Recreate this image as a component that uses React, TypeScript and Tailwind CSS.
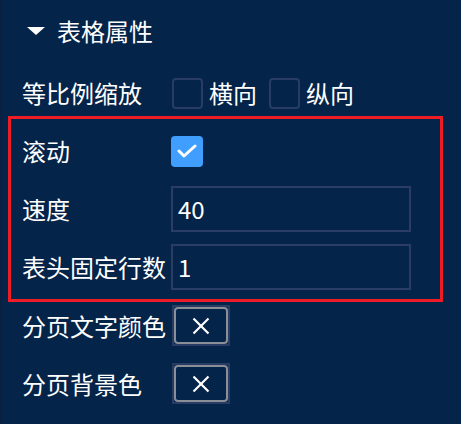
import React from 'react';

const font = { fontFamily: '"Noto Sans CJK SC", "Noto Sans", sans-serif' };

const Box: React.FC<{ checked?: boolean }> = ({ checked }) => {
    if (checked) {
        return (
            <div className="w-[32px] h-[31px] rounded-[4px] bg-[#409eff] flex items-center justify-center">
                <svg width="20" height="14" viewBox="0 0 20 14">
                    <polyline points="2,7 7,12 18,2" fill="none" stroke="#fff" strokeWidth="3" strokeLinecap="round" strokeLinejoin="round" />
                </svg>
            </div>
        );
    }
    return <div className="w-[31px] h-[31px] rounded-[4px] border-2 border-[#293c63]"></div>;
};

const ColorButton: React.FC = () => (
    <div className="w-[58px] h-[41px] border-2 border-[#283b62]">
        <div className="w-full h-full rounded-[4px] border-2 border-[#8a8e96] flex items-center justify-center">
            <svg width="18" height="18" viewBox="0 0 18 18">
                <line x1="1.5" y1="1.5" x2="16.5" y2="16.5" stroke="#fff" strokeWidth="2.2" />
                <line x1="16.5" y1="1.5" x2="1.5" y2="16.5" stroke="#fff" strokeWidth="2.2" />
            </svg>
        </div>
    </div>
);

const Input: React.FC<{ value: string }> = ({ value }) => (
    <div className="w-[240px] h-[46px] border-2 border-[#2b3d64] flex items-center pl-[5px] text-[24px] text-white">
        {value}
    </div>
);

export default function App() {
    return (
        <div className="w-[461px] h-[424px] bg-[#05244a] border-l-2 border-[#0b1f3e] text-white overflow-hidden" style={font}>
            {/* heading */}
            <div className="h-[40px] mt-[11px] flex items-center pl-[25px]">
                <svg width="18" height="8" viewBox="0 0 18 8" className="mr-[12px]">
                    <polygon points="0,0 18,0 9,8" fill="#fff" />
                </svg>
                <span className="text-[24px] leading-none">表格属性</span>
            </div>

            {/* 等比例缩放 */}
            <div className="h-[46px] mt-[19px] flex items-center pl-[20px] text-[24px] leading-none">
                <span className="w-[150px]">等比例缩放</span>
                <Box />
                <span className="ml-[6px]">横向</span>
                <div className="ml-[12px]"><Box /></div>
                <span className="ml-[6px]">纵向</span>
            </div>

            {/* highlighted group */}
            <div className="mx-[6px] w-[435px] border-[3px] border-[#ee1c25] pt-[9px] pb-[9px] flex flex-col gap-[12px] text-[24px] leading-none">
                <div className="h-[46px] flex items-center pl-[11px]">
                    <span className="w-[149px]">滚动</span>
                    <Box checked />
                </div>
                <div className="h-[46px] flex items-center pl-[11px]">
                    <span className="w-[149px]">速度</span>
                    <Input value="40" />
                </div>
                <div className="h-[46px] flex items-center pl-[11px]">
                    <span className="w-[149px] whitespace-nowrap">表头固定行数</span>
                    <Input value="1" />
                </div>
            </div>

            {/* pagination colors */}
            <div className="mt-[3px] flex flex-col gap-[17px] text-[24px] leading-none">
                <div className="h-[41px] flex items-center pl-[20px]">
                    <span className="w-[150px] whitespace-nowrap">分页文字颜色</span>
                    <ColorButton />
                </div>
                <div className="h-[41px] flex items-center pl-[20px]">
                    <span className="w-[150px]">分页背景色</span>
                    <ColorButton />
                </div>
            </div>
        </div>
    );
}
